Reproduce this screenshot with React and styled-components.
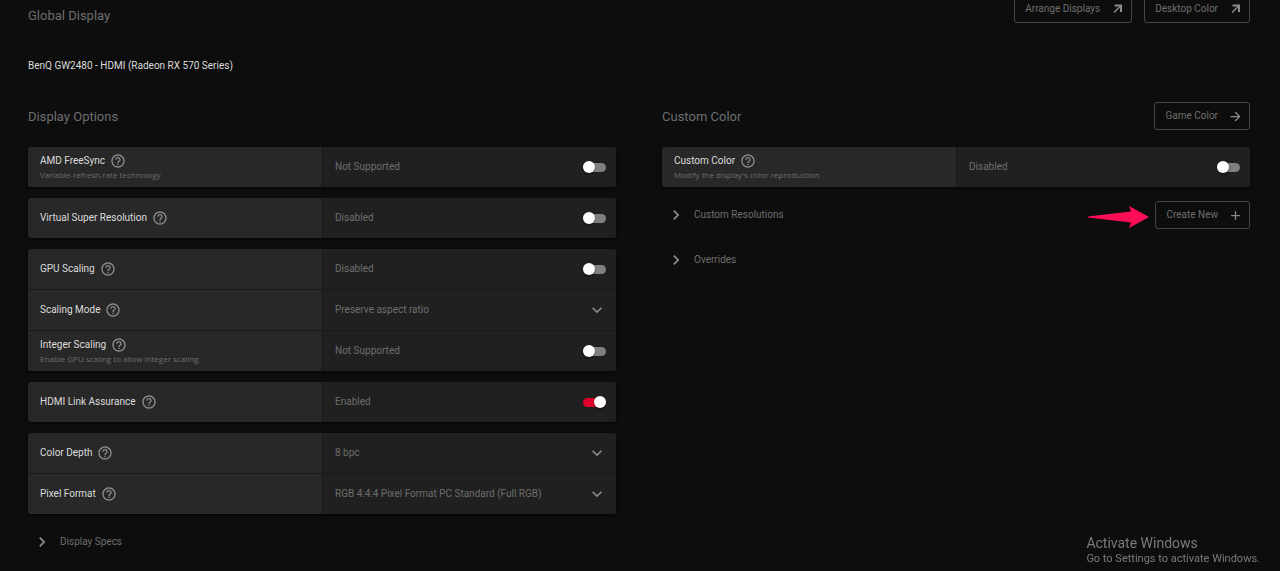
import { useState } from "react";
import styled, { createGlobalStyle } from "styled-components";
import {
  MdAdd,
  MdArrowForward,
  MdChevronRight,
  MdExpandMore,
  MdHelpOutline,
} from "react-icons/md";

const GlobalStyle = createGlobalStyle`
  * {
    box-sizing: border-box;
  }

  body {
    margin: 0;
    background: #0d0d0d;
    color: #6e6e6e;
    font-family: Roboto, "Open Sans", sans-serif;
    font-size: 10px;
    line-height: 16px;
    overflow: hidden;
  }

  button,
  select {
    font: inherit;
    color: inherit;
  }
`;

const Page = styled.main`
  min-height: 100vh;
  margin-top: -5px;
  padding: 0 30px 0 28px;
`;

const Header = styled.header`
  display: flex;
  align-items: flex-start;
  justify-content: space-between;
  height: 51px;
`;

const PageTitle = styled.h1`
  margin: 0;
  padding-top: 11px;
  font-size: 13px;
  font-weight: 400;
  line-height: 20px;
`;

const Actions = styled.div`
  display: flex;
  gap: 12px;
`;

const OutlineButton = styled.button`
  display: flex;
  align-items: center;
  gap: 10px;
  height: 28px;
  padding: 0 6px 0 10px;
  border: 1px solid #444;
  border-radius: 3px;
  background: transparent;

  svg {
    color: #8c8c8c;
  }
`;

const DisplayName = styled.p`
  margin: 12px 0 28px;
  color: #dcdcdc;
`;

const Columns = styled.div`
  display: grid;
  grid-template-columns: 1fr 1fr;
  gap: 46px;
`;

const SectionHead = styled.div`
  display: flex;
  align-items: center;
  justify-content: space-between;
  height: 28px;
  margin-bottom: 17px;
`;

const SectionTitle = styled.h2`
  margin: 0;
  padding-top: 2px;
  font-size: 13px;
  font-weight: 400;
  line-height: 20px;
`;

const Card = styled.div`
  display: grid;
  gap: 1px;
  margin-bottom: 11px;
  border-radius: 3px;
  background: #191919;
  box-shadow: 0 1px 3px rgba(0, 0, 0, 0.6);
  overflow: hidden;
`;

const Row = styled.div`
  display: grid;
  grid-template-columns: 1fr 1fr;
  height: 40px;
`;

const LabelCell = styled.div`
  display: flex;
  flex-direction: column;
  justify-content: center;
  padding: 0 12px;
  background: #282828;
`;

const LabelLine = styled.div`
  display: flex;
  align-items: center;
  gap: 5px;
  color: #dcdcdc;

  svg {
    color: #8c8c8c;
  }
`;

const Hint = styled.span`
  font-family: "Open Sans", sans-serif;
  font-size: 8px;
  line-height: 12px;
`;

const ValueCell = styled.div`
  display: flex;
  align-items: center;
  justify-content: space-between;
  position: relative;
  padding: 0 10px 0 12px;
  border-left: 1px solid #191919;
  background: #202020;
`;

const Switch = styled.input`
  appearance: none;
  display: flex;
  align-items: center;
  justify-content: ${({ checked }) => (checked ? "flex-end" : "flex-start")};
  width: 23px;
  height: 9px;
  margin: 0;
  border-radius: 5px;
  background: ${({ checked }) => (checked ? "#e0032d" : "#808080")};

  &::before {
    content: "";
    flex: none;
    width: 12px;
    height: 12px;
    border-radius: 50%;
    background: #fff;
    box-shadow: 0 1px 2px rgba(0, 0, 0, 0.5);
  }
`;

const Select = styled.select`
  appearance: none;
  flex: 1;
  height: 40px;
  padding: 0;
  border: 0;
  background: transparent;
`;

const SelectArrow = styled(MdExpandMore)`
  position: absolute;
  right: 9px;
  color: #8c8c8c;
  pointer-events: none;
`;

const ExpanderRow = styled.div`
  display: flex;
  align-items: center;
  justify-content: space-between;
  height: 34px;
`;

const Expander = styled.button`
  display: flex;
  align-items: center;
  gap: 8px;
  padding: 0 4px;
  border: 0;
  background: transparent;

  svg {
    color: #8c8c8c;
  }
`;

const Resolutions = styled.div`
  display: grid;
  gap: 11px;
`;

const CreateGroup = styled.div`
  display: flex;
  align-items: center;
  gap: 6px;
`;

const PointerSvg = styled.svg`
  margin-top: 3px;
`;

const Watermark = styled.aside`
  position: fixed;
  right: 20px;
  bottom: 4px;
  color: #7a7a7a;
  font-size: 11px;
`;

const WatermarkTitle = styled.div`
  font-size: 14px;
`;

const ExternalIcon = () => (
  <svg width="15" height="16" viewBox="0 0 15 16" fill="none" stroke="currentColor">
    <path d="M4 11.500 10 5.500" strokeWidth="1.500" />
    <path d="M4.500 4.500H11V11" strokeWidth="2" />
  </svg>
);

const PointerArrow = () => (
  <PointerSvg width="61" height="22" viewBox="0 0 61 22" aria-hidden="true">
    <path d="M0 10.500 43 5.500 41 0 61 11 41 22 43 16.500 0 11.500Z" fill="#ff0d57" />
  </PointerSvg>
);

function Setting({ id, label, hint, value, options, on = false }) {
  const [checked, setChecked] = useState(on);

  return (
    <Row>
      <LabelCell>
        <LabelLine>
          <label htmlFor={id}>{label}</label>
          <MdHelpOutline size={16} />
        </LabelLine>
        {hint && <Hint>{hint}</Hint>}
      </LabelCell>
      <ValueCell>
        {options ? (
          <>
            <Select id={id}>
              {options.map((option) => (
                <option key={option}>{option}</option>
              ))}
            </Select>
            <SelectArrow size={20} />
          </>
        ) : (
          <>
            <span>{value}</span>
            <Switch
              id={id}
              type="checkbox"
              checked={checked}
              onChange={() => setChecked(!checked)}
            />
          </>
        )}
      </ValueCell>
    </Row>
  );
}

const displayCards = [
  [
    {
      id: "freesync",
      label: "AMD FreeSync",
      hint: "Variable-refresh-rate technology",
      value: "Not Supported",
    },
  ],
  [{ id: "vsr", label: "Virtual Super Resolution", value: "Disabled" }],
  [
    { id: "gpu-scaling", label: "GPU Scaling", value: "Disabled" },
    { id: "scaling-mode", label: "Scaling Mode", options: ["Preserve aspect ratio"] },
    {
      id: "integer-scaling",
      label: "Integer Scaling",
      hint: "Enable GPU scaling to allow integer scaling.",
      value: "Not Supported",
    },
  ],
  [{ id: "hdmi-link", label: "HDMI Link Assurance", value: "Enabled", on: true }],
  [
    { id: "color-depth", label: "Color Depth", options: ["8 bpc"] },
    {
      id: "pixel-format",
      label: "Pixel Format",
      options: ["RGB 4:4:4 Pixel Format PC Standard (Full RGB)"],
    },
  ],
];

export default function App() {
  return (
    <>
      <GlobalStyle />
      <Page>
        <Header>
          <PageTitle>Global Display</PageTitle>
          <Actions>
            <OutlineButton>
              Arrange Displays
              <ExternalIcon />
            </OutlineButton>
            <OutlineButton>
              Desktop Color
              <ExternalIcon />
            </OutlineButton>
          </Actions>
        </Header>
        <DisplayName>BenQ GW2480 - HDMI (Radeon RX 570 Series)</DisplayName>
        <Columns>
          <section>
            <SectionHead>
              <SectionTitle>Display Options</SectionTitle>
            </SectionHead>
            {displayCards.map((rows) => (
              <Card key={rows[0].id}>
                {rows.map((row) => (
                  <Setting key={row.id} {...row} />
                ))}
              </Card>
            ))}
            <ExpanderRow>
              <Expander>
                <MdChevronRight size={20} />
                Display Specs
              </Expander>
            </ExpanderRow>
          </section>
          <section>
            <SectionHead>
              <SectionTitle>Custom Color</SectionTitle>
              <OutlineButton>
                Game Color
                <MdArrowForward size={15} />
              </OutlineButton>
            </SectionHead>
            <Card>
              <Setting
                id="custom-color"
                label="Custom Color"
                hint="Modify the display's color reproduction"
                value="Disabled"
              />
            </Card>
            <Resolutions>
              <ExpanderRow>
                <Expander>
                  <MdChevronRight size={20} />
                  Custom Resolutions
                </Expander>
                <CreateGroup>
                  <PointerArrow />
                  <OutlineButton>
                    Create New
                    <MdAdd size={15} />
                  </OutlineButton>
                </CreateGroup>
              </ExpanderRow>
              <ExpanderRow>
                <Expander>
                  <MdChevronRight size={20} />
                  Overrides
                </Expander>
              </ExpanderRow>
            </Resolutions>
          </section>
        </Columns>
      </Page>
      <Watermark>
        <WatermarkTitle>Activate Windows</WatermarkTitle>
        Go to Settings to activate Windows.
      </Watermark>
    </>
  );
}
